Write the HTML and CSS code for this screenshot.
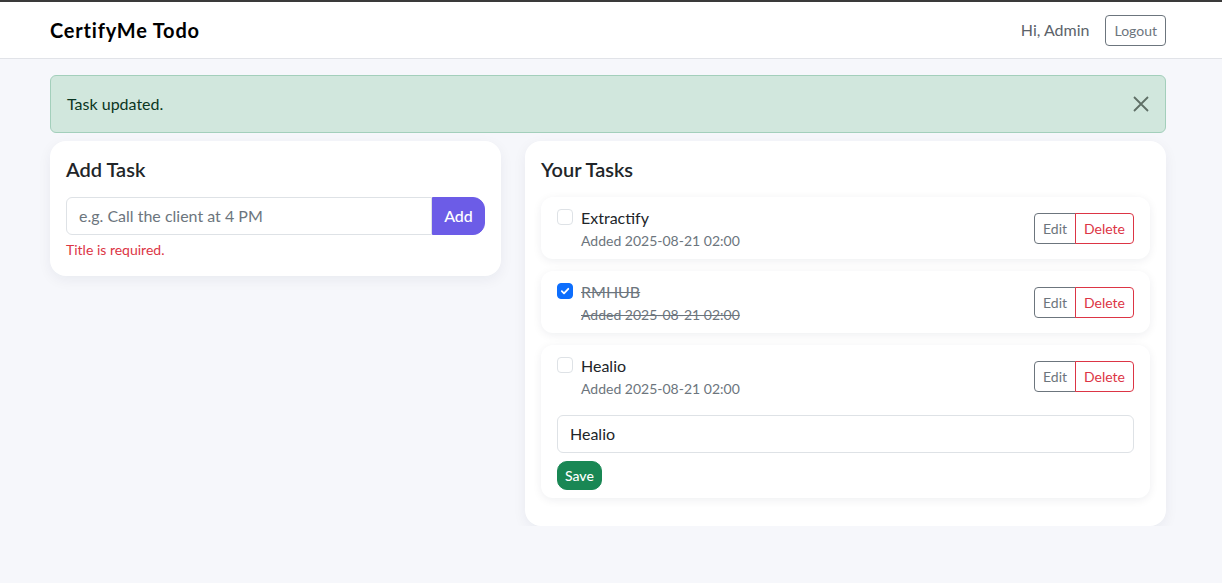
FILE: index.html
```html
<!DOCTYPE html>
<html lang="en">
<head>
<meta charset="utf-8">
<title>CertifyMe Todo</title>
<link rel="stylesheet" href="styles.css">
</head>
<body>
<nav class="navbar">
  <div class="container nav-inner">
    <span class="brand">CertifyMe Todo</span>
    <div class="nav-right">
      <span class="greet">Hi, Admin</span>
      <button class="btn btn-sm btn-outline-secondary">Logout</button>
    </div>
  </div>
</nav>
<main class="container main">
  <div class="alert">
    <span>Task updated.</span>
    <button class="btn-close" aria-label="Close">
      <svg width="16" height="16" viewBox="0 0 16 16"><path d="M1 1L15 15M15 1L1 15" stroke="currentColor" stroke-width="1.8" fill="none"/></svg>
    </button>
  </div>
  <div class="row">
    <section class="card col-left">
      <h5 class="card-title">Add Task</h5>
      <div class="input-group">
        <input class="form-control group-input" type="text" placeholder="e.g. Call the client at 4 PM">
        <button class="btn btn-add">Add</button>
      </div>
      <div class="error">Title is required.</div>
    </section>
    <section class="card col-right">
      <h5 class="card-title">Your Tasks</h5>
      <ul class="task-list">
        <li class="task">
          <div class="task-row">
            <div class="task-main">
              <span class="check"></span>
              <div class="task-text">
                <div class="task-title">Extractify</div>
                <div class="task-meta">Added 2025-08-21 02:00</div>
              </div>
            </div>
            <div class="btn-group">
              <button class="btn btn-sm btn-outline-secondary">Edit</button>
              <button class="btn btn-sm btn-outline-danger">Delete</button>
            </div>
          </div>
        </li>
        <li class="task done">
          <div class="task-row">
            <div class="task-main">
              <span class="check checked">
                <svg width="10" height="10" viewBox="0 0 10 10"><path d="M1.8 5.2L4 7.3L8.3 2.8" stroke="#fff" stroke-width="1.8" fill="none" stroke-linecap="round" stroke-linejoin="round"/></svg>
              </span>
              <div class="task-text">
                <div class="task-title">RMHUB</div>
                <div class="task-meta">Added 2025-08-21 02:00</div>
              </div>
            </div>
            <div class="btn-group">
              <button class="btn btn-sm btn-outline-secondary">Edit</button>
              <button class="btn btn-sm btn-outline-danger">Delete</button>
            </div>
          </div>
        </li>
        <li class="task">
          <div class="task-row">
            <div class="task-main">
              <span class="check"></span>
              <div class="task-text">
                <div class="task-title">Healio</div>
                <div class="task-meta">Added 2025-08-21 02:00</div>
              </div>
            </div>
            <div class="btn-group">
              <button class="btn btn-sm btn-outline-secondary">Edit</button>
              <button class="btn btn-sm btn-outline-danger">Delete</button>
            </div>
          </div>
          <div class="edit-form">
            <input class="form-control" type="text" value="Healio">
            <button class="btn btn-sm btn-save">Save</button>
          </div>
        </li>
      </ul>
    </section>
  </div>
</main>
</body>
</html>
```
FILE: styles.css
```css
* { box-sizing: border-box; }
html, body { margin: 0; }
body {
  font-family: "Segoe UI", Lato, "Noto Sans", sans-serif;
  font-size: 16px;
  line-height: 1.5;
  color: #212529;
  background: #f6f7fb;
}
button, input { font-family: inherit; }

.container {
  width: 1116px;
  margin-left: 50px;
}

.navbar {
  background: #fff;
  border-top: 2px solid #3a3a3a;
  border-bottom: 1px solid #e1e3e8;
  padding: 8px 0;
}
.nav-inner {
  display: flex;
  align-items: center;
  justify-content: space-between;
  height: 40px;
}
.brand {
  font-size: 20px;
  font-weight: 700;
  letter-spacing: 0.8px;
  color: #000;
}
.nav-right {
  display: flex;
  align-items: center;
  gap: 16px;
}
.greet { color: #5c636a; }

.btn {
  display: inline-block;
  border: 1px solid transparent;
  background: transparent;
  font-size: 16px;
  line-height: 1.5;
  padding: 6px 12px;
  border-radius: 6px;
  cursor: pointer;
}
.btn-sm {
  font-size: 14px;
  line-height: 21px;
  padding: 4px 8px;
  border-radius: 4px;
}
.btn-outline-secondary { border-color: #6c757d; color: #6c757d; }
.btn-outline-danger { border-color: #dc3545; color: #dc3545; }

.main { padding-top: 16px; }

.alert {
  display: flex;
  align-items: center;
  justify-content: space-between;
  background: #d1e7dd;
  border: 1px solid #a3cfbb;
  color: #0a3622;
  border-radius: 6px;
  padding: 16px 16px;
  margin-bottom: 8px;
}
.btn-close {
  border: 0;
  background: transparent;
  color: #5f6f66;
  padding: 0;
  margin-right: 0;
  width: 16px;
  height: 16px;
  display: flex;
}

.row {
  display: flex;
  gap: 24px;
  align-items: flex-start;
}
.card {
  background: #fff;
  border-radius: 16px;
  box-shadow: 0 4px 14px rgba(20, 30, 60, 0.06);
  padding: 16px;
}
.col-left { width: 451px; }
.col-right { width: 641px; }
.card-title {
  margin: 0 0 16px;
  font-size: 20px;
  line-height: 24px;
  font-weight: 600;
}

.input-group { display: flex; }
.form-control {
  display: block;
  width: 100%;
  font-size: 16px;
  line-height: 24px;
  padding: 6px 12px;
  color: #212529;
  background: #fff;
  border: 1px solid #dee2e6;
  border-radius: 6px;
  outline: none;
}
.form-control::placeholder { color: #6c757d; }
.group-input {
  flex: 1;
  border-top-right-radius: 0;
  border-bottom-right-radius: 0;
}
.btn-add {
  background: #6c5ce7;
  border-color: #6c5ce7;
  color: #fff;
  font-weight: 500;
  border-radius: 0 12px 12px 0;
  width: 53px;
  padding: 6px 0;
}
.error {
  margin-top: 4px;
  font-size: 14px;
  line-height: 21px;
  color: #dc3545;
}

.task-list {
  list-style: none;
  margin: 0;
  padding: 0 0 12px;
  display: flex;
  flex-direction: column;
  gap: 12px;
}
.task {
  background: #fff;
  border-radius: 12px;
  box-shadow: 0 2px 10px rgba(20, 30, 60, 0.07);
  padding: 9px 16px 8px;
}
.task-row {
  display: flex;
  align-items: center;
  justify-content: space-between;
}
.task-main {
  display: flex;
  align-items: flex-start;
  gap: 8px;
}
.check {
  width: 16px;
  height: 16px;
  margin-top: 3px;
  border: 1px solid #dee2e6;
  border-radius: 4px;
  background: #fff;
  display: flex;
  align-items: center;
  justify-content: center;
  flex-shrink: 0;
}
.check.checked {
  background: #0d6efd;
  border-color: #0d6efd;
}
.task-title { line-height: 24px; }
.task-meta {
  font-size: 14px;
  line-height: 21px;
  color: #6c757d;
}
.done .task-title,
.done .task-meta {
  text-decoration: line-through;
  color: #6c757d;
}

.btn-group { display: flex; }
.btn-group .btn:first-child { border-radius: 4px 0 0 4px; }
.btn-group .btn:last-child { border-radius: 0 4px 4px 0; margin-left: -1px; }

.edit-form { margin-top: 16px; }
.btn-save {
  margin-top: 8px;
  padding: 3px 7px;
  background: #198754;
  border-color: #198754;
  color: #fff;
  font-weight: 500;
  border-radius: 10px;
}
```
